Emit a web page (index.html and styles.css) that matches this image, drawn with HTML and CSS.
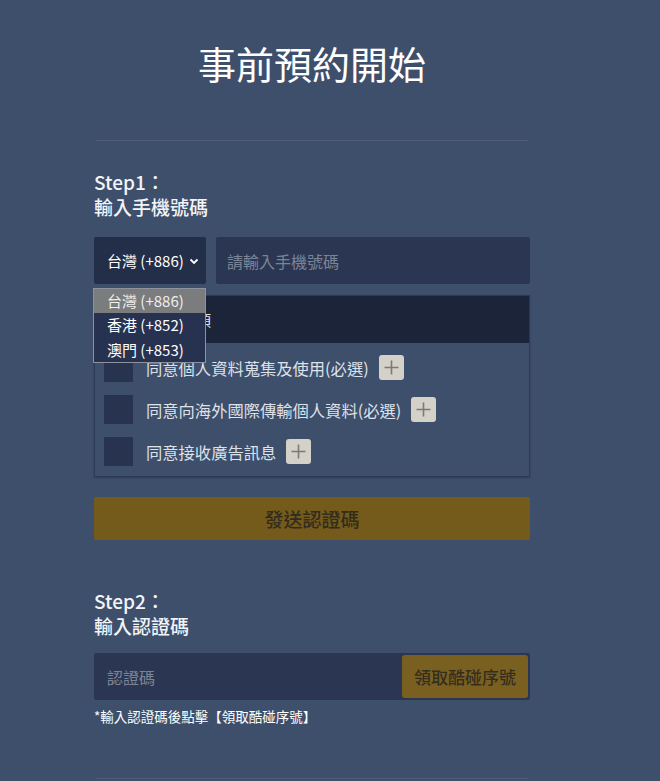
FILE: index.html
```html
<!DOCTYPE html>
<html lang="zh-Hant">
<head>
<meta charset="utf-8">
<title>事前預約開始</title>
<link rel="stylesheet" href="styles.css">
</head>
<body>
<div class="page">
  <h1 class="title">事前預約開始</h1>
  <hr class="divider">

  <section class="step step-one">
    <div class="step-label">Step1：<br>輸入手機號碼</div>
    <div class="phone-row">
      <div class="select-wrap">
        <div class="select">
          <span>台灣 (+886)</span>
          <svg class="chev" width="10" height="7" viewBox="0 0 10 7"><path d="M1.5 1.5 L5 5 L8.5 1.5" fill="none" stroke="#ffffff" stroke-width="1.8"/></svg>
        </div>
        <ul class="dropdown">
          <li class="opt opt-active">台灣 (+886)</li>
          <li class="opt">香港 (+852)</li>
          <li class="opt">澳門 (+853)</li>
        </ul>
      </div>
      <div class="field phone-field">請輸入手機號碼</div>
    </div>

    <div class="agree-box">
      <div class="agree-head"><span class="head-text">請勾選同意事項</span></div>
      <div class="agree-list">
        <div class="agree-row">
          <span class="check"></span>
          <span class="agree-text">同意個人資料蒐集及使用(必選)</span>
          <span class="plus"><svg width="25" height="25" viewBox="0 0 25 25"><path d="M12.5 5.5 V19.5 M5.5 12.5 H19.5" stroke="#7b7a74" stroke-width="1.6"/></svg></span>
        </div>
        <div class="agree-row">
          <span class="check"></span>
          <span class="agree-text">同意向海外國際傳輸個人資料(必選)</span>
          <span class="plus"><svg width="25" height="25" viewBox="0 0 25 25"><path d="M12.5 5.5 V19.5 M5.5 12.5 H19.5" stroke="#7b7a74" stroke-width="1.6"/></svg></span>
        </div>
        <div class="agree-row">
          <span class="check"></span>
          <span class="agree-text">同意接收廣告訊息</span>
          <span class="plus"><svg width="25" height="25" viewBox="0 0 25 25"><path d="M12.5 5.5 V19.5 M5.5 12.5 H19.5" stroke="#7b7a74" stroke-width="1.6"/></svg></span>
        </div>
      </div>
    </div>

    <div class="send-btn">發送認證碼</div>
  </section>

  <section class="step step-two">
    <div class="step-label">Step2：<br>輸入認證碼</div>
    <div class="code-row">
      <div class="code-placeholder">認證碼</div>
      <div class="coupon-btn">領取酷碰序號</div>
    </div>
    <p class="note">*輸入認證碼後點擊【領取酷碰序號】</p>
  </section>

  <hr class="divider divider-bottom">
</div>
</body>
</html>
```

FILE: styles.css
```css
* { box-sizing: border-box; }

html, body {
  margin: 0;
  padding: 0;
  background: #3e4f6c;
  font-family: "Noto Sans CJK TC", "Noto Sans", sans-serif;
  color: #ffffff;
  overflow: hidden;
}

.page {
  width: 436px;
  margin-left: 94px;
  padding-top: 40px;
}

.title {
  margin: 0;
  font-size: 38px;
  font-weight: 400;
  line-height: 46px;
  text-align: center;
}

.divider {
  margin: 54px 2px 0 2px;
  border: 0;
  height: 1px;
  background: #4c5c79;
}

.step-label {
  font-size: 19px;
  line-height: 25px;
  font-weight: 500;
  color: #f2f4f7;
}

.step-one { margin-top: 28px; }

.phone-row {
  display: flex;
  gap: 10px;
  margin-top: 18px;
  height: 47px;
}

.select-wrap {
  position: relative;
  width: 112px;
  flex: none;
}

.select {
  height: 47px;
  background: #232f49;
  display: flex;
  align-items: center;
  justify-content: space-between;
  padding: 0 7px 0 13px;
  font-size: 15px;
  color: #ffffff;
  border-radius: 2px;
}

.chev { margin-top: 1px; }

.dropdown {
  position: absolute;
  left: -1px;
  top: 51px;
  width: 113px;
  margin: 0;
  padding: 0;
  list-style: none;
  border: 1px solid #8d929c;
  background: #263250;
  z-index: 5;
}

.opt {
  height: 24.3px;
  line-height: 24px;
  padding-left: 13px;
  font-size: 15px;
  color: #ffffff;
}

.opt-active {
  background: #7b7c7e;
  color: #eeeeee;
}

.field {
  flex: 1;
  background: #2b3752;
  display: flex;
  align-items: center;
  padding-left: 11px;
  font-size: 16px;
  color: #7b8497;
  border-radius: 2px;
}

.agree-box {
  margin-top: 11px;
  border: 1px solid #2d3a55;
  box-shadow: 0 1px 2px rgba(20, 28, 45, 0.35);
}

.agree-head {
  height: 47px;
  background: #1b2438;
  display: flex;
  align-items: center;
  padding-left: 11px;
  font-size: 15px;
  color: #dfe3ea;
}

.agree-list {
  padding: 10px 9px 10px 9px;
  display: flex;
  flex-direction: column;
  gap: 13px;
}

.agree-row {
  display: flex;
  align-items: center;
  height: 29px;
}

.check {
  width: 29px;
  height: 29px;
  background: #28344f;
  flex: none;
}

.agree-text {
  margin-left: 13px;
  font-size: 16.3px;
  color: #dde1e8;
}

.plus {
  margin-left: 10px;
  width: 25px;
  height: 25px;
  background: #d4d1c9;
  border-radius: 3px;
  display: flex;
}

.send-btn {
  margin-top: 20px;
  height: 43px;
  background: #745b1b;
  border-radius: 2px;
  display: flex;
  align-items: center;
  justify-content: center;
  font-size: 19px;
  font-weight: 500;
  color: #332c1c;
}

.step-two { margin-top: 48px; }

.code-row {
  margin-top: 15px;
  height: 47px;
  background: #2b3752;
  display: flex;
  align-items: center;
  padding: 2px 2px 2px 13px;
  border-radius: 2px;
}

.code-placeholder {
  flex: 1;
  font-size: 16px;
  color: #7b8497;
}

.coupon-btn {
  width: 126px;
  height: 43px;
  background: #7a6020;
  border-radius: 3px;
  display: flex;
  align-items: center;
  justify-content: center;
  font-size: 17px;
  font-weight: 500;
  color: #352e1d;
}

.note {
  margin: 7px 0 0 0;
  font-size: 13.5px;
  line-height: 18px;
  color: #ffffff;
}

.divider-bottom {
  margin-top: 53px;
}
```
